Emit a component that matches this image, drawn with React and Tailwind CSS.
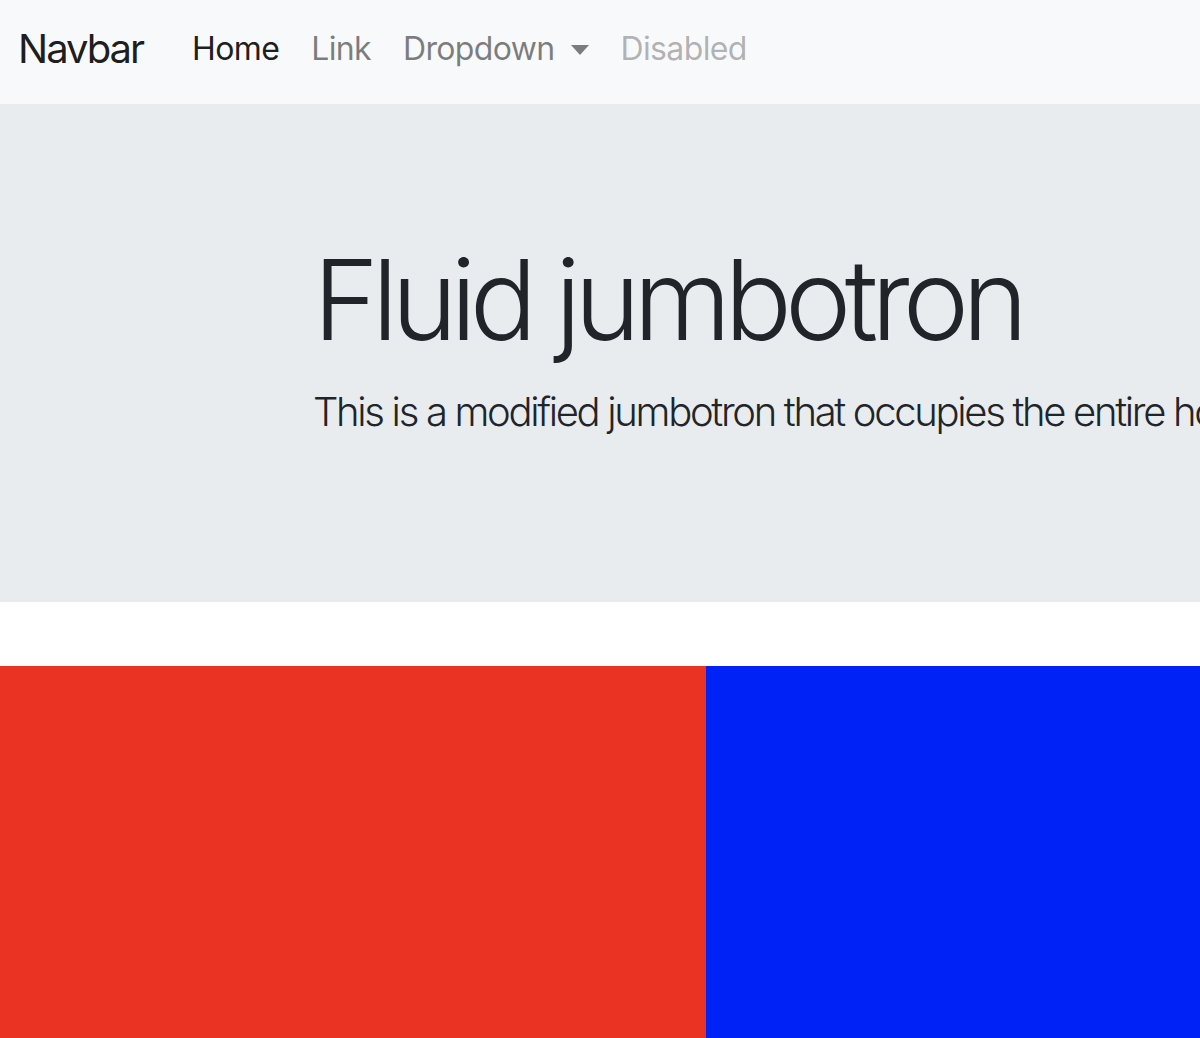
import React from 'react';

function Caret() {
  return (
    <svg width="18" height="10" viewBox="0 0 18 10" className="ml-[16px] mt-[2px]" fill="currentColor">
      <polygon points="0,0 18,0 9,10" />
    </svg>
  );
}

function Navbar() {
  return (
    <nav className="h-[104px] bg-[#f8f9fa] flex items-center pl-[18px] pb-[6px] text-[32px] tracking-[-0.02em]">
      <a href="#" className="text-[40px] tracking-[-0.05em] text-[rgba(0,0,0,0.9)] mr-[33px]">Navbar</a>
      <ul className="flex items-center">
        <li><a href="#" className="px-4 text-[rgba(0,0,0,0.9)]">Home</a></li>
        <li><a href="#" className="px-4 text-[rgba(0,0,0,0.5)]">Link</a></li>
        <li>
          <a href="#" className="px-4 text-[rgba(0,0,0,0.5)] flex items-center">
            Dropdown
            <Caret />
          </a>
        </li>
        <li><span className="px-4 text-[rgba(0,0,0,0.3)]">Disabled</span></li>
      </ul>
    </nav>
  );
}

export default function App() {
  return (
    <div className="w-[1200px] h-[1038px] overflow-hidden bg-white font-['Inter','Liberation_Sans',sans-serif] text-[#212529]">
      <Navbar />
      {/* jumbotron */}
      <div className="bg-[#e9ecef] pt-[128px] pb-[128px] mb-[64px] h-[498px]">
        <div className="pl-[313px] whitespace-nowrap">
          <h1 className="text-[112px] leading-[1.2] font-light tracking-[-0.061em] mb-[16px]">Fluid jumbotron</h1>
          <p className="text-[40px] leading-[1.5] font-light tracking-[-0.058em]">
            This is a modified jumbotron that occupies the entire horizontal space of its parent.
          </p>
        </div>
      </div>
      <div className="flex h-[372px]">
        <div className="w-[706px] bg-[#ea3323]" />
        <div className="flex-1 bg-[#0022f7]" />
      </div>
    </div>
  );
}
